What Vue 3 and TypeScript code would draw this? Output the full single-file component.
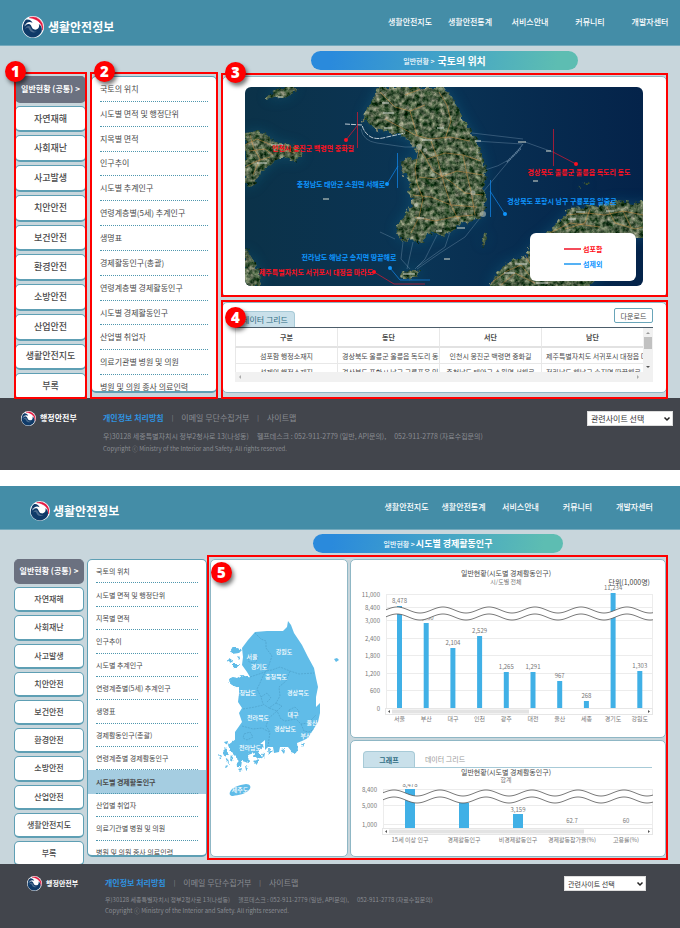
<script setup lang="ts">
interface Screen {
  id: string
  compact: boolean
  title: string
  selected: string
}

interface MapLabel {
  text: string
  x: number
  y: number
  tone: 'red' | 'blue'
}

interface Bar {
  name: string
  label: string
  top: number
}

const screens: Screen[] = [
  { id: 'location', compact: false, title: '국토의 위치', selected: '' },
  { id: 'economy', compact: true, title: '시도별 경제활동인구', selected: '시도별 경제활동인구' },
]

const navItems = ['생활안전지도', '생활안전통계', '서비스안내', '커뮤니티', '개발자센터']

const categories = [
  '일반현황 (공통)', '자연재해', '사회재난', '사고발생', '치안안전', '보건안전',
  '환경안전', '소방안전', '산업안전', '생활안전지도', '부록',
]

const menuItems = [
  '국토의 위치', '시도별 면적 및 행정단위', '지목별 면적', '인구추이', '시도별 추계인구',
  '연령계층별(5세) 추계인구', '생명표', '경제활동인구(총괄)', '연령계층별 경제활동인구',
  '시도별 경제활동인구', '산업별 취업자', '의료기관별 병원 및 의원', '병원 및 의원 종사 의료인력',
]

const mapLabels: MapLabel[] = [
  { text: '인천시 옹진군 백령면 중화길', x: 68, y: 64, tone: 'red' },
  { text: '충청남도 태안군 소원면 서해로', x: 96, y: 100, tone: 'blue' },
  { text: '전라남도 해남군 송지면 땅끝해로', x: 104, y: 173, tone: 'blue' },
  { text: '제주특별자치도 서귀포시 대정읍 마라도', x: 71, y: 188, tone: 'red' },
  { text: '경상북도 울릉군 울릉읍 독도리 동도', x: 334, y: 88, tone: 'red' },
  { text: '경상북도 포항시 남구 구룡포읍 일출로', x: 317, y: 117, tone: 'blue' },
]

const gridHead = ['구분', '동단', '서단', '남단']
const gridRows = [
  ['섬포함 행정소재지', '경상북도 울릉군 울릉읍 독도리 동도', '인천시 옹진군 백령면 중화길', '제주특별자치도 서귀포시 대정읍 마라도'],
  ['섬제외 행정소재지', '경상북도 포항시 남구 구룡포읍 일출로', '충청남도 태안군 소원면 서해로', '전라남도 해남군 송지면 땅끝해로'],
]

const provinces = [
  { name: '서울', x: 33, y: 39 }, { name: '강원도', x: 65, y: 34 }, { name: '경기도', x: 40, y: 49 },
  { name: '충청북도', x: 57, y: 59 }, { name: '충청남도', x: 26, y: 75 }, { name: '경상북도', x: 79, y: 75 },
  { name: '대구', x: 74, y: 97 }, { name: '전라북도', x: 39, y: 100 }, { name: '울산', x: 93, y: 105 },
  { name: '경상남도', x: 66, y: 111 }, { name: '부산', x: 87, y: 118 }, { name: '전라남도', x: 31, y: 130 },
  { name: '제주도', x: 21, y: 172 },
]

const regionTicks = [
  { y: 7, label: '11,000' }, { y: 20, label: '8,400' }, { y: 33, label: '3,000' }, { y: 51, label: '2,400' },
  { y: 68, label: '1,800' }, { y: 86, label: '1,200' }, { y: 103, label: '600' }, { y: 121, label: '0' },
]
const regionBars: Bar[] = [
  { name: '서울', label: '8,478', top: 18 }, { name: '부산', label: '2,930', top: 35 },
  { name: '대구', label: '2,104', top: 60 }, { name: '인천', label: '2,529', top: 48 },
  { name: '광주', label: '1,265', top: 84 }, { name: '대전', label: '1,291', top: 84 },
  { name: '울산', label: '967', top: 93 }, { name: '세종', label: '268', top: 113 },
  { name: '경기도', label: '11,234', top: 5 }, { name: '강원도', label: '1,303', top: 83 },
]
const regionX = (i: number) => 43.5 + i * 26.7

const totalTicks = [{ y: 5, label: '8,400' }, { y: 21, label: '5,000' }, { y: 40, label: '1,000' }]
const totalBars: Bar[] = [
  { name: '15세 이상 인구', label: '8,478', top: 5 },
  { name: '경제활동인구', label: '5,319', top: 19 },
  { name: '비경제활동인구', label: '3,159', top: 30 },
  { name: '경제활동참가율(%)', label: '62.7', top: 41 },
  { name: '고용률(%)', label: '60', top: 41 },
]
const totalX = (i: number) => 54 + i * 54

// One sine-like stroke; the pair of strokes marks the axis break.
function wave(x0: number, x1: number, y: number, reverse = false): string {
  const pts: string[] = []
  for (let x = x0; x <= x1; x += 1) {
    const v = y - 3 * Math.cos(((x - x0 - 11) / 46) * Math.PI * 2)
    pts.push(`${x} ${v.toFixed(2)}`)
  }
  if (reverse) pts.reverse()
  return pts.join(' L')
}
const breakBand = (x0: number, x1: number, y: number) =>
  `M${wave(x0, x1, y)} L${wave(x0, x1, y + 7, true)} Z`
const breakLines = (x0: number, x1: number, y: number) =>
  `M${wave(x0, x1, y)} M${wave(x0, x1, y + 7)}`
</script>

<template>
  <div class="sheet">
    <svg class="defs" width="0" height="0">
      <symbol id="emblem" viewBox="0 0 24 24">
        <circle cx="12" cy="12" r="12" fill="#fff" />
        <path d="M8 1.900 A10.900 10.900 0 0 1 22.200 15.500 C22.600 8.500 17 3 8 1.900 Z" fill="#e4173e" stroke="#e4173e" stroke-width=".6" />
        <path d="M4.500 4.500 A10.800 10.800 0 1 0 21.300 17.500 C22.300 13.800 21.300 10.200 18.300 8.600 C19.800 12.300 17 15.600 13.600 14.800 C9.800 13.800 11 9.500 7.800 8.700 C5.600 8.200 4 9.600 3 11.500 C2.900 8.500 3.400 6.200 4.500 4.500 Z" fill="#0f3a68" />
        <path d="M2.500 7 C3 5.500 3.600 4.600 4.800 3.800 C8 3.200 10.500 5 11.500 7.500 C9 6 5.500 6 3 10.500 Z" fill="#0f3a68" />
        <path d="M3.300 14.500 C4.500 10.500 8 10 9.300 12.500 C10.600 15.500 12.500 17.500 16.500 17 C10.500 19.500 8.600 16.500 7.600 14 C6.600 12.200 4.600 12.500 3.300 14.500 Z" fill="#fff" opacity=".25" />
      </symbol>
    </svg>

    <section v-for="s in screens" :key="s.id" class="screen" :class="{ compact: s.compact }">
      <header class="top">
        <a class="brand" href="#"><svg class="brand-mark"><use href="#emblem" /></svg>생활안전정보</a>
        <nav class="nav">
          <a v-for="n in navItems" :key="n" href="#">{{ n }}</a>
        </nav>
      </header>

      <main class="body">
        <h1 class="pill"><span>일반현황 &gt;</span><strong>{{ s.title }}</strong></h1>

        <div class="cats">
          <div class="cats-clip">
            <ul>
              <li v-for="(c, i) in categories" :key="c">
                <button type="button" :class="{ active: i === 0 }">{{ c }}<i v-if="i === 0">&gt;</i></button>
              </li>
            </ul>
          </div>
          <div v-if="!s.compact" class="mark"><b class="badge">1</b></div>
        </div>

        <div class="menu">
          <div class="menu-panel">
            <ul>
              <li v-for="m in menuItems" :key="m" :class="{ selected: m === s.selected }"><a href="#">{{ m }}</a></li>
            </ul>
          </div>
          <div v-if="!s.compact" class="mark tall"><b class="badge">2</b></div>
        </div>

        <div v-if="!s.compact" class="content stack">
          <div class="card map-card">
            <svg class="satellite" viewBox="0 0 398 199">
              <defs>
                <linearGradient id="sea" x1="0" y1="0" x2="1" y2="0">
                  <stop offset="0" stop-color="#0b3249" /><stop offset=".45" stop-color="#0a3455" /><stop offset="1" stop-color="#04234a" />
                </linearGradient>
                <filter id="terrain" x="-5%" y="-5%" width="110%" height="110%" color-interpolation-filters="sRGB">
                  <feTurbulence type="fractalNoise" baseFrequency=".2" numOctaves="4" seed="8" result="n" />
                  <feDisplacementMap in="SourceGraphic" in2="n" scale="8" xChannelSelector="R" yChannelSelector="G" result="shape" />
                  <feColorMatrix in="n" type="matrix" values="1.100 0 0 0 -.25  .9 .1 0 0 -.12  .9 0 0 0 -.18  0 0 0 0 1" result="tone" />
                  <feComposite in="tone" in2="shape" operator="in" />
                </filter>
                <filter id="shallow" x="-10%" y="-10%" width="120%" height="120%"><feGaussianBlur stdDeviation="7" /></filter>
                <path id="lands" d="M0 46 12 44 22 47 30 55 42 57 55 60 58 68 50 75 40 71 32 71 25 78 15 88 7 99 0 102Z M22 9 30 3 35 0 53 0 47 6 38 12 28 10 22 14Z M0 160 7 171 15 186 17 199 0 199Z M132 0 129 11 122 21 118 33 127 40 135 43 142 45 152 48 160 50 167 56 172 66 172 73 163 70 155 75 157 85 162 90 165 96 163 106 168 111 165 121 160 128 155 135 150 142 153 148 158 155 166 151 170 155 178 155 183 147 192 146 199 150 205 145 212 139 223 135 233 133 238 127 242 111 238 101 241 88 239 75 233 56 227 45 218 31 210 15 200 0Z M155 188 160 184 172 181 175 185 169 191 158 194Z M402 113 388 116 372 114 355 118 338 120 325 121 318 130 308 140 298 149 285 158 281 170 270 172 258 179 250 189 243 203 340 203 352 192 388 152 402 152Z M236 160 239 147 242 146 240 157Z M339 96 341 94 344 96 341 99Z M332 101 335 99 336 102Z" />
              </defs>
              <rect width="398" height="199" fill="url(#sea)" />
              <use href="#lands" fill="#1480a0" opacity=".3" filter="url(#shallow)" />
              <g filter="url(#terrain)"><use href="#lands" fill="#2f4a32" /></g>
              <g fill="none" stroke="#d0924a" stroke-width=".7" opacity=".75">
                <path d="M0 58 12 52 22 56 35 62 50 66 M5 48 9 62 15 72 8 88 M0 80 12 74 25 70 M4 64 20 62 28 68" />
                <path d="M135 5 150 20 165 24 180 18 M140 32 155 40 170 48 185 52 205 50 225 54 M172 58 180 70 188 84 205 94 220 106 238 108 M174 62 170 82 172 96 178 112 174 130 166 146 M186 54 192 70 196 86 200 100 206 118 214 134 M182 72 200 66 218 68 236 74 M174 90 190 92 212 84 238 88 M168 108 186 110 206 118 232 120 M170 130 190 134 208 130 228 128 M200 52 206 34 202 18 194 5 M160 8 176 2 M165 24 172 48 M218 68 222 88 226 104 230 128" />
                <path d="M322 128 342 126 360 128 378 124 398 128 M345 122 340 136 320 142 M362 120 370 136 390 142 398 140 M378 124 386 140 M305 146 325 136 355 140 M246 196 262 184 276 178 284 188 M256 198 270 186 290 196 M280 168 286 178" />
              </g>
              <g fill="#c9cfc6" opacity=".55">
                <circle cx="174" cy="60" r="3" /><circle cx="180" cy="63" r="2" /><circle cx="228" cy="106" r="2.500" /><circle cx="238" cy="127" r="3" /><circle cx="188" cy="88" r="2" /><circle cx="171" cy="118" r="2" />
                <rect x="12" y="75" width="10" height="2" /><rect x="26" y="57" width="12" height="2" /><rect x="137" y="15" width="7" height="2" /><rect x="138" y="25" width="11" height="2" /><rect x="139" y="40" width="8" height="2" /><rect x="177" y="52" width="10" height="2" /><rect x="192" y="40" width="7" height="2" /><rect x="172" y="130" width="7" height="2" /><rect x="191" y="143" width="6" height="2" /><rect x="212" y="140" width="8" height="2" /><rect x="331" y="124" width="9" height="2" /><rect x="361" y="123" width="8" height="2" /><rect x="323" y="131" width="8" height="2" /><rect x="270" y="176" width="12" height="2" /><rect x="259" y="185" width="11" height="2" /><rect x="291" y="195" width="12" height="2" /><rect x="158" y="186" width="12" height="2" /><rect x="78" y="111" width="6" height="2" /><rect x="288" y="93" width="5" height="2" /><rect x="199" y="171" width="6" height="2" /><rect x="33" y="9" width="5" height="2" /><rect x="273" y="54" width="8" height="2" /><rect x="301" y="63" width="5" height="2" /><rect x="230" y="53" width="6" height="2" />
              </g>
              <g fill="none" stroke="#9db8cf" stroke-width=".5" opacity=".6">
                <path d="M227 46 278 52 M230 54 277 57 M280 55 308 65 M278 57 Q268 76 240 83 M278 57 238 105 M235 131 220 150 195 166 172 182 M205 145 200 160 172 180 M158 155 156 172 165 182 M168 155 162 182 M192 148 180 172 170 182 M116 42 Q118 54 132 56 L160 60 170 60 M135 145 150 152" />
                <path d="M262 75 276 61" stroke-dasharray="1 1" stroke-width="2" />
              </g>
              <path d="M100 37 117 38 Q119 46 126 50 Q132 53 142 50 L160 46" fill="none" stroke="#dfe6ea" stroke-width="1" stroke-dasharray="5 1" opacity=".85" />
              <g class="pins red">
                <path d="M112.500 25V61 M112 39 101 53 M308.500 42V79 M308 65 331 77 M129 185 149 197H180" />
                <circle cx="101" cy="53" r="2" /><circle cx="331" cy="77" r="2" /><circle cx="129" cy="185" r="2" />
              </g>
              <g class="pins blue">
                <path d="M152.500 66V101 M153 79 142 97 M245.500 93V130 M245 104 260 127 M145 181 155 193H185" />
                <circle cx="142" cy="97" r="2" /><circle cx="260" cy="127" r="2" /><circle cx="145" cy="181" r="2" />
              </g>
              <text v-for="l in mapLabels" :key="l.text" class="map-label" :class="l.tone" :x="l.x" :y="l.y">{{ l.text }}</text>
              <rect x="285" y="146" width="106" height="48" rx="6" fill="#fff" />
              <path d="M319 162H336" stroke="#f01024" stroke-width="1.500" />
              <path d="M319 177H336" stroke="#1c97f0" stroke-width="1.500" />
              <text class="map-label key red" x="338" y="165">섬포함</text>
              <text class="map-label key blue" x="338" y="180">섬제외</text>
            </svg>
            <div class="mark"><b class="badge">3</b></div>
          </div>

          <div class="card table-card">
            <div class="tabs">
              <button type="button" class="tab on">데이터 그리드</button>
              <button type="button" class="download">다운로드</button>
            </div>
            <div class="grid-box">
              <div class="grid-view">
                <table>
                  <thead><tr><th v-for="h in gridHead" :key="h" scope="col">{{ h }}</th></tr></thead>
                  <tbody>
                    <tr v-for="r in gridRows" :key="r[0]"><td v-for="c in r" :key="c">{{ c }}</td></tr>
                  </tbody>
                </table>
              </div>
              <div class="vbar"><i class="up"></i><i class="thumb"></i><i class="down"></i></div>
              <div class="hbar"><i class="left"></i><i class="right"></i></div>
            </div>
            <div class="mark low"><b class="badge">4</b></div>
          </div>
        </div>

        <div v-else class="content split">
          <div class="card korea-card">
            <svg class="korea" viewBox="0 0 121 177">
              <defs>
                <filter id="coast" x="-5%" y="-5%" width="110%" height="110%">
                  <feTurbulence type="fractalNoise" baseFrequency=".3" numOctaves="2" seed="3" result="n" />
                  <feDisplacementMap in="SourceGraphic" in2="n" scale="4" xChannelSelector="R" yChannelSelector="G" />
                </filter>
              </defs>
              <path d="M69 1 72 5 75 13 83 25 89 37 95 48 97 58 99 67 97 77 97 87 101 83 101 93 99 102 94 110 89 118 83 121 78 123 79 131 73 132 69 127 61 127 60 132 55 133 54 127 49 127 46 130 46 120 40 125 30 130 16 126 16 112 23 102 20 93 23 88 19 82 20 73 20 62 31 57 28 52 23 45 24 37 23 28 29 20 36 12 48 11 64 11 68 7Z" fill="#60bce8" />
              <g filter="url(#coast)" fill="#60bce8">
                <path d="M24 70 13 65 9 62 13 57 18 58 23 55 32 58 30 72Z M46 126 39 132 43 137 34 138 35 133 29 135 30 143 23 141 22 147 19 147 18 137 11 130 9 125 17 119 34 122Z" />
                <path d="M12 29 16 27 23 30 20 33 13 34Z M10 38 13 40 12 43 9 41Z M14 44 20 44 18 48 14 47Z M17 36 22 37 20 40Z M3 132 7 128 9 133 6 137Z M0 134 3 136 1 139Z M6 141 9 139 10 144Z M12 135 15 139 11 141Z M19 149 23 148 22 152Z M26 146 30 147 27 150Z M34 141 40 139 37 144Z M43 134 46 133 45 138Z M49 128 53 131 50 135Z M62 130 66 129 65 134Z M72 127 79 127 77 134 72 132Z M82 124 86 123 84 127Z M9 147 6 148 7 145Z M5 122 9 121 8 126Z" />
              </g>
              <path d="M11 172C13 167 20 165 27 164C31 164 33 167 30 170C27 174 19 175 14 176C11 176 10 174 11 172Z" fill="#60bce8" />
              <path d="M115 39 118 38 120 40 117 42Z" fill="#60bce8" />
              <g fill="none" stroke="#4796bf" stroke-width=".5" stroke-dasharray="2 1">
                <path d="M36 13 42 19 47 21 47 28 53 36 50 45 47 51 53 50 61 47 71 51 80 54 95 53 M47 51 44 56 41 63 38 69 42 77 44 84 50 88 57 83 61 76 60 67 67 61 71 51 M31 57 37 55 46 52 M57 83 63 86 58 91 62 99 66 101 77 99 82 104 89 103 97 95 M24 89 36 87 44 85 M50 88 58 91 50 98 47 106 51 112 49 126 M23 106 34 109 43 108 50 112 M29 38 34 34 39 38 36 43 30 42Z M70 90 76 87 80 91 77 97 71 97Z M25 114 31 112 34 117 28 120 24 118Z M82 104 85 111 90 112 95 109 M42 77 48 73 52 78 48 82" />
              </g>
              <text v-for="p in provinces" :key="p.name" :x="p.x" :y="p.y" class="province">{{ p.name }}</text>
            </svg>
          </div>

          <div class="charts">
            <div class="card chart-card">
              <h2>일반현황(시도별 경제활동인구)</h2>
              <p class="sub">시/도별 전체</p>
              <svg class="chart" viewBox="0 0 300 147">
                <text class="unit" x="294" y="-3">단위(1,000명)</text>
                <g v-for="t in regionTicks" :key="t.label">
                  <path class="rule" :d="`M30 ${t.y - 0.5}H297`" />
                  <text class="tick" x="24" :y="t.y + 2">{{ t.label }}</text>
                </g>
                <path class="rule" d="M30.500 7V121 M296.500 7V121" />
                <g v-for="(b, i) in regionBars" :key="b.name">
                  <rect class="bar" :x="regionX(i) - 2.5" :y="b.top" width="5" :height="120 - b.top" />
                  <text class="val" :x="regionX(i)" :y="b.top - 3">{{ b.label }}</text>
                  <text class="val" :x="regionX(i)" y="133">{{ b.name }}</text>
                </g>
                <path :d="breakBand(30, 297, 22)" fill="#fff" />
                <path class="wave" :d="breakLines(30, 297, 22)" />
                <rect class="track" x="29.500" y="120.500" width="267" height="6" />
                <rect class="knob" x="36" y="121.500" width="137" height="4" />
                <path class="arrow" d="M34 122V125L32 123.500Z M292 122V125L294 123.500Z" />
              </svg>
            </div>

            <div class="card chart-card lower">
              <div class="tabs">
                <button type="button" class="tab on strong">그래프</button>
                <button type="button" class="tab">데이터 그리드</button>
              </div>
              <h2>일반현황(시도별 경제활동인구)</h2>
              <p class="sub">합계</p>
              <svg class="chart clipped" viewBox="0 0 300 66">
                <g v-for="t in totalTicks" :key="t.label">
                  <path class="rule" :d="`M27 ${t.y + 0.5}H297`" />
                  <text class="tick" x="21" :y="t.y + 3">{{ t.label }}</text>
                </g>
                <path class="rule" d="M27.500 5V45 M296.500 5V45" />
                <g v-for="(b, i) in totalBars" :key="b.name">
                  <rect v-if="b.top < 41" class="bar" :x="totalX(i) - 5" :y="b.top" width="10" :height="44 - b.top" />
                  <text class="val" :x="totalX(i)" :y="b.top - 2">{{ b.label }}</text>
                  <text class="val" :x="totalX(i)" y="58">{{ b.name }}</text>
                </g>
                <path :d="breakBand(27, 297, 9)" fill="#fff" />
                <path class="wave" :d="breakLines(27, 297, 9)" />
                <rect class="track" x="26.500" y="44.500" width="270" height="6" />
                <rect class="knob" x="33" y="45.500" width="195" height="4" />
                <path class="arrow" d="M31 46V49L29 47.500Z M292 46V49L294 47.500Z" />
              </svg>
            </div>
          </div>
          <div class="mark five"><b class="badge">5</b></div>
        </div>
      </main>

      <footer class="foot">
        <a class="ministry" href="#"><svg class="ministry-mark"><use href="#emblem" /></svg>행정안전부</a>
        <div class="legal">
          <nav>
            <a class="privacy" href="#">개인정보 처리방침</a><i>|</i><a href="#">이메일 무단수집거부</a><i>|</i><a href="#">사이트맵</a>
          </nav>
          <address>
            <span>우)30128 세종특별자치시 정부2청사로 13(나성동)</span>
            <span>헬프데스크 : 052-911-2779 (일반, API문의),</span>
            <span>052-911-2778 (자료수집문의)</span>
          </address>
          <small>Copyright ⓒ Ministry of the Interior and Safety. All rights reserved.</small>
        </div>
        <div class="related">
          <select aria-label="관련사이트 선택"><option>관련사이트 선택</option></select>
          <svg viewBox="0 0 8 8"><path d="M1.500 2.500 4 5 6.500 2.500" fill="none" stroke="#222" stroke-width="1.500" /></svg>
        </div>
      </footer>
    </section>
  </div>
</template>

<style>
body { margin: 0; background: #fff; }
</style>

<style scoped>
.sheet {
  display: flex;
  flex-direction: column;
  gap: 16px;
  font-family: "Noto Sans CJK KR", "Noto Sans", sans-serif;
  color: #4a4a4a;
}
.sheet *, .sheet *::before, .sheet *::after { box-sizing: border-box; }
.defs { position: absolute; }
ul { margin: 0; padding: 0; list-style: none; }
a { color: inherit; text-decoration: none; }
button { font: inherit; color: inherit; margin: 0; padding: 0; border: 0; background: none; }
i { font-style: normal; }

.screen {
  --side: 71px;
  --menu: 126px;
  --gap: 5px;
  --fs-menu: 8px;
  --fs-cat: 9px;
  --edge: #5e9fb4;
}
.compact {
  --side: 70px;
  --menu: 120px;
  --gap: 3px;
  --fs-menu: 7px;
  --fs-cat: 8px;
}

.top {
  display: flex;
  align-items: center;
  justify-content: space-between;
  height: 46px;
  padding: 8px 0 0 22px;
  background: #448da7;
  border-bottom: 1px solid #74a9bc;
  color: #fff;
}
.compact .top { height: 44px; padding: 6px 17px 0 30px; }
.brand { display: flex; align-items: center; gap: 4px; font-size: 12px; font-weight: 700; line-height: 22px; }
.brand-mark { width: 22px; height: 22px; }
.compact .brand-mark { width: 20px; height: 20px; }
.compact .brand { gap: 3px; }
.nav { display: grid; grid-template-columns: repeat(5, 60px); text-align: center; font-size: 8px; font-weight: 500; line-height: 12px; padding-bottom: 10px; }
.compact .nav { grid-template-columns: repeat(5, 57px); padding-bottom: 8px; }

.body {
  display: grid;
  grid-template-columns: var(--side) var(--menu) 1fr;
  column-gap: var(--gap);
  row-gap: 6px;
  padding: 5px 13px 5px 15px;
  background: #c8d6dc;
}
.compact .body { padding: 4px 14px 7px 14px; }
.pill {
  grid-column: 3;
  justify-self: center;
  display: flex;
  align-items: center;
  justify-content: center;
  gap: 3px;
  width: 60%;
  height: 19px;
  margin: 0;
  border-radius: 10px;
  background: linear-gradient(100deg, #2a8adc 8%, #5dbdb2 92%);
  color: #fff;
  font-size: 7px;
  font-weight: 500;
}
.pill strong { font-size: 10px; font-weight: 700; }
.compact .pill { width: 55%; gap: 1px; }
.compact .pill strong { font-size: 9px; }

.cats, .menu, .card, .content { position: relative; }
.cats { grid-column: 1; display: flex; margin-bottom: -5px; }
.compact .cats { margin-bottom: -7px; }
.cats-clip { flex: 1; display: flex; overflow: hidden; }
.cats ul { flex: 1; display: flex; flex-direction: column; gap: 3px; margin-bottom: -2px; }
.cats li { flex: 1; display: flex; }
.cats button {
  flex: 1;
  min-height: 24px;
  background: #fff;
  border: 1px solid var(--edge);
  border-bottom-width: 2px;
  border-radius: 5px;
  font-size: var(--fs-cat);
  font-weight: 500;
  line-height: 12px;
  white-space: nowrap;
}
.cats button.active { background: #6b7180; border-color: #6b7180; color: #fff; font-size: 8px; font-weight: 700; }
.cats button i { margin-left: 2px; }

.menu { display: flex; }
.menu-panel {
  flex: 1;
  display: flex;
  overflow: hidden;
  background: #fff;
  border: 1px solid var(--edge);
  border-bottom-width: 2px;
  border-radius: 5px;
}
.menu ul { flex: 1; display: grid; grid-auto-rows: 1fr; margin: 0 0 -9px; }
.menu li { display: flex; padding: 0 8px; }
.menu li a {
  flex: 1;
  display: flex;
  align-items: center;
  border-bottom: 1px dotted #4f97ae;
  font-size: var(--fs-menu);
  line-height: 12px;
  white-space: nowrap;
}
.menu li.selected { background: #a5cde1; font-weight: 700; }

.card { background: #fff; border: 1px solid #8fb7c5; border-radius: 5px; }
.stack { display: flex; flex-direction: column; gap: 5px; }
.map-card { padding: 10px 23px 10px 22px; }
.satellite { display: block; width: 100%; border-radius: 6px; }
.map-label { font-size: 7px; font-weight: 700; text-anchor: middle; }
.map-label.key { text-anchor: start; }
.red { fill: #ff1020; }
.blue { fill: #0f96ff; }
.pins path { fill: none; stroke-width: .7; }
.pins.red path { stroke: #e01830; }
.pins.blue path { stroke: #128af0; }

.tabs { display: flex; align-items: flex-end; }
.tab { min-width: 60px; height: 16px; border-radius: 4px 4px 0 0; color: #999; font-size: 7px; line-height: 14px; }
.tab.on { background: #c9e0ea; border: 1px solid #a7cad7; border-bottom: 0; color: #2f6c82; font-size: 8px; }
.table-card { padding: 5px 13px 11px 12px; }
.table-card .tabs { height: 19px; justify-content: space-between; }
.download { align-self: flex-start; width: 39px; height: 15px; border: 1px solid #69a5b9; border-radius: 2px; background: #fff; font-size: 7px; line-height: 12px; }
.grid-box { display: grid; grid-template-columns: 1fr 10px; grid-template-rows: 44px 10px; border-top: 1px solid #4c5d6a; margin-bottom: -1px; }
.grid-view { overflow: hidden; min-width: 0; }
table { width: 100%; table-layout: fixed; border-collapse: separate; border-spacing: 0; font-size: 7px; line-height: 10px; }
th, td { padding: 0 4px; overflow: hidden; white-space: nowrap; text-align: center; border-left: 1px solid #e8e8e8; }
th { height: 20px; border-bottom: 2px solid #e2e2e2; font-weight: 700; }
td { height: 16px; border-bottom: 1px solid #e8e8e8; }
.vbar { display: flex; flex-direction: column; align-items: center; background: #f1f1f1; padding: 4px 0; }
.vbar .thumb { width: 8px; height: 12px; margin: 3px 0 auto; background: #c1c1c1; }
.up, .down { border: 2px solid transparent; }
.up { border-top: 0; border-bottom-color: #999; }
.down { border-bottom: 0; border-top-color: #555; }
.hbar { grid-column: 1 / 3; display: flex; justify-content: space-between; align-items: center; padding: 0 14px 0 4px; background: #f1f1f1; }
.left, .right { border: 2px solid transparent; }
.left { border-left: 0; border-right-color: #aaa; }
.right { border-right: 0; border-left-color: #aaa; }

.split { display: grid; grid-template-columns: 138px 1fr; gap: 2px; }
.korea-card { padding: 60px 7px 0 8px; }
.korea { display: block; width: 100%; overflow: visible; }
.province { font-size: 6px; font-weight: 500; fill: #fff; text-anchor: middle; }
.charts { display: flex; flex-direction: column; gap: 2px; min-width: 0; }
.chart-card { padding: 8px 9px 2px 5px; }
.chart-card h2 { margin: 0; text-align: center; font-size: 7px; font-weight: 400; line-height: 10px; }
.sub { margin: 0 0 2px; text-align: center; font-size: 6px; line-height: 8px; color: #777; }
.lower { padding: 10px 9px 6px 5px; }
.lower .tabs { margin: 0 4px 0 7px; border-bottom: 1px solid #a7cad7; height: 17px; }
.lower .tab.on { min-width: 52px; }
.lower .tab.strong { font-weight: 700; font-size: 7px; }
.lower h2 { line-height: 8px; }
.lower .sub { margin: 0; }
.chart { display: block; width: 100%; overflow: visible; }
.chart.clipped { overflow: hidden; }
.chart text { font-size: 6px; fill: #777; }
.chart .unit { font-size: 7px; text-anchor: end; fill: #444; }
.chart .tick { text-anchor: end; }
.chart .val { text-anchor: middle; }
.rule { stroke: #ececec; fill: none; }
.bar { fill: #40b0e6; }
.wave { fill: none; stroke: #555; stroke-width: .8; }
.track { fill: #fff; stroke: #e6e6e6; }
.knob { fill: #e3e3e3; }
.arrow { fill: #555; }

.mark { position: absolute; inset: -4px -1px -1px; border: 2px solid #f00; z-index: 2; pointer-events: none; }
.mark.tall { bottom: -6px; }
.mark.low { inset: -3px -2px -7px; }
.mark.five { inset: -4px -2px -3px -3px; }
.card > .mark { left: -2px; right: -2px; }
.badge {
  position: absolute;
  top: -13px;
  left: -11px;
  width: 21px;
  height: 21px;
  border-radius: 50%;
  background: #f00;
  box-shadow: 2px 3px 4px rgba(0, 0, 0, .55);
  color: #fff;
  font: 800 15px/21px "Open Sans", "Noto Sans", sans-serif;
  text-align: center;
}
.tall .badge, .card .badge { left: 2px; }
.low .badge { top: 5px; }
.five .badge { top: 5px; left: 2px; }

.foot {
  display: flex;
  align-items: flex-start;
  height: 72px;
  padding: 12px 7px 0 21px;
  background: #42454c;
  color: #8a8d93;
}
.compact .foot { height: 64px; padding: 11px 34px 0 27px; }
.ministry { display: flex; align-items: center; gap: 4px; width: 82px; color: #fff; font-size: 8px; font-weight: 700; line-height: 16px; }
.compact .ministry { width: 78px; font-size: 7px; }
.ministry-mark { width: 15px; height: 15px; }
.legal { flex: 1; min-width: 0; font-size: 7px; white-space: nowrap; }
.compact .legal { font-size: 6px; }
.legal nav { display: flex; gap: 8px; font-size: 8px; line-height: 16px; }
.legal nav i { font-size: 6px; }
.privacy { color: #2f93e0; font-weight: 700; }
address { display: flex; gap: 8px; margin-top: 5px; font-style: normal; line-height: 10px; }
small { display: block; margin-top: 4px; font-size: 6px; line-height: 8px; }
.compact address { margin-top: 4px; }
.compact small { margin-top: 2px; }
.related { position: relative; width: 86px; height: 15px; margin-top: 1px; }
.compact .related { width: 82px; }
select { display: block; width: 100%; height: 100%; padding: 0 3px; border: 1px solid #ddd; border-radius: 0; background: #fff; color: #333; font: 8px/12px "Noto Sans CJK KR", sans-serif; appearance: none; }
.compact select { font-size: 7px; }
.related svg { position: absolute; right: 2px; top: 4px; width: 8px; height: 8px; pointer-events: none; }
</style>
